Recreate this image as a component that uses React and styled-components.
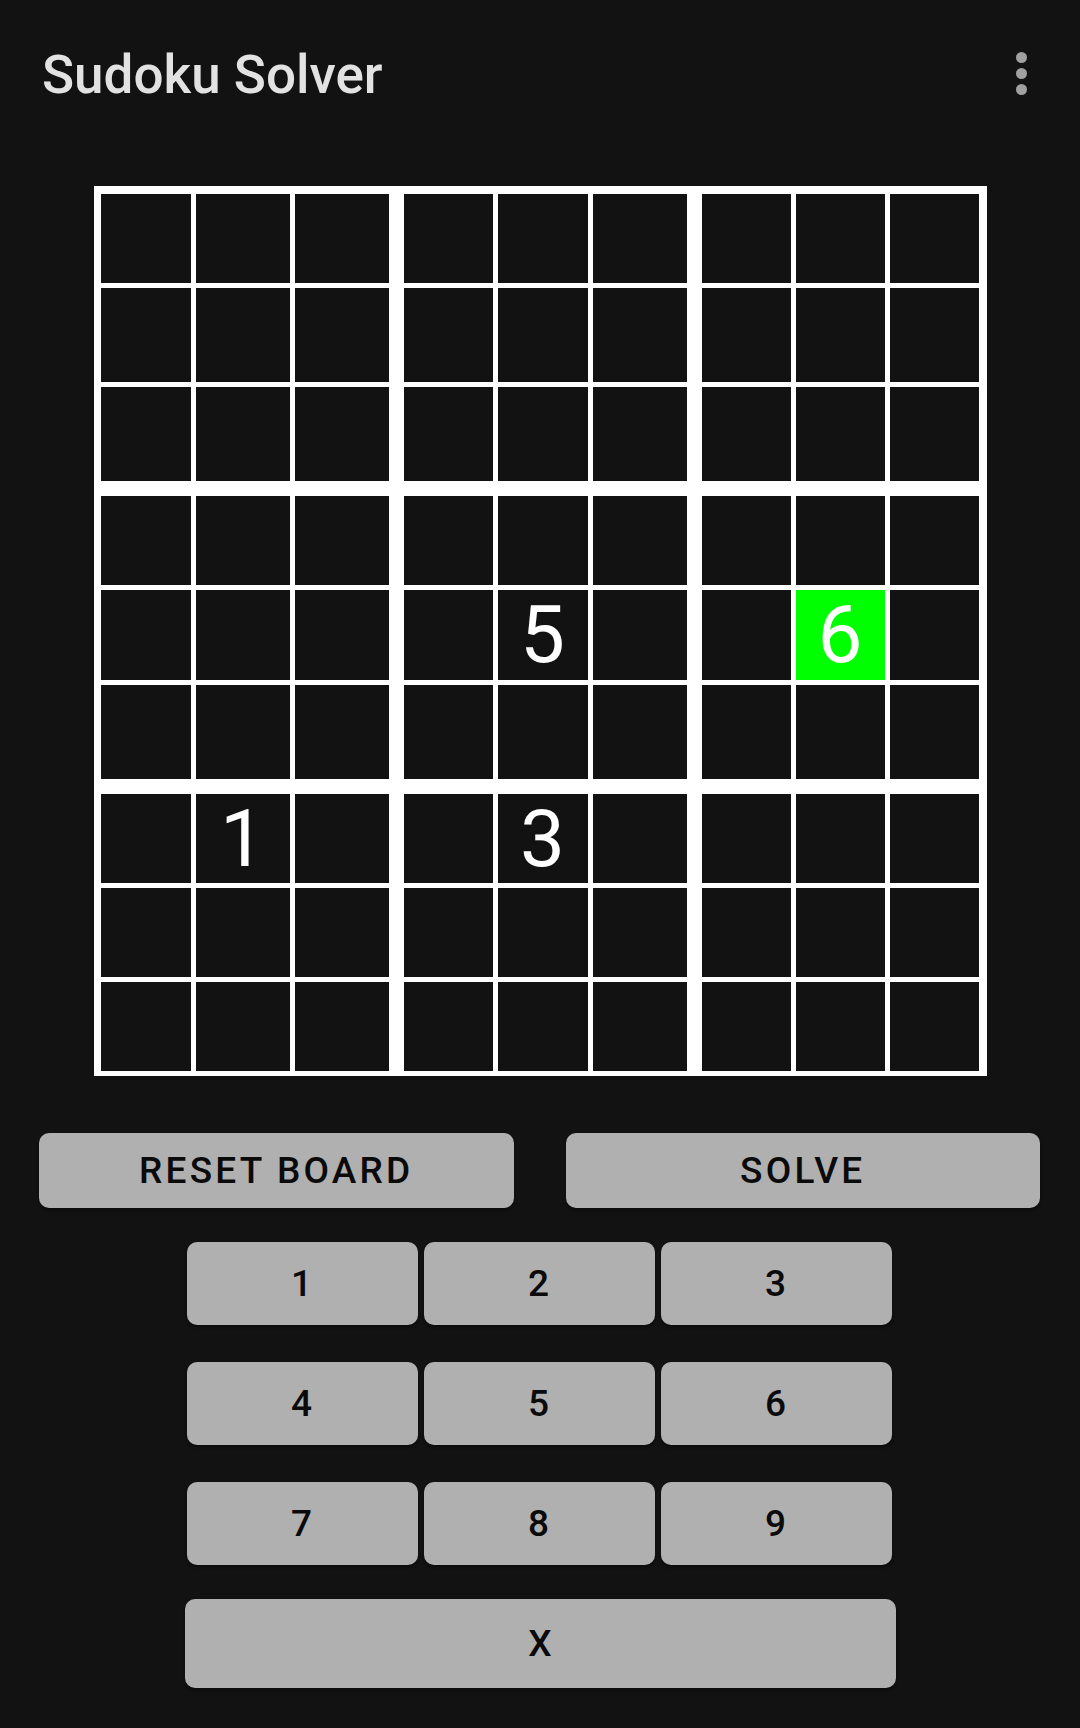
import styled, { createGlobalStyle } from 'styled-components'

const GlobalStyle = createGlobalStyle`
  body {
    margin: 0;
    background: #121212;
    font-family: Roboto, "Noto Sans", sans-serif;
  }
`

// irregular track sizes, measured from the device layout
const COLS = ['90px 94px 94px', '89px 90px 94px', '89px 89px 89px']
const ROWS = ['89px 94px 94px', '89px 90px 94px', '89px 89px 89px']

const givens = {
  '4-4': '5',
  '4-7': '6',
  '6-1': '1',
  '6-4': '3',
}
const selected = '4-7'

const App = () => {
  const boxes = []
  for (let br = 0; br < 3; br++) {
    for (let bc = 0; bc < 3; bc++) {
      const cells = []
      for (let r = 0; r < 3; r++) {
        for (let c = 0; c < 3; c++) {
          const key = `${br * 3 + r}-${bc * 3 + c}`
          cells.push(
            <Cell key={key} $active={key === selected}>
              {givens[key] ?? ''}
            </Cell>
          )
        }
      }
      boxes.push(
        <Box key={`${br}-${bc}`} $cols={COLS[bc]} $rows={ROWS[br]}>
          {cells}
        </Box>
      )
    }
  }

  return (
    <Page>
      <GlobalStyle />
      <Header>
        <Title>Sudoku Solver</Title>
        <Overflow>
          <Dot />
          <Dot />
          <Dot />
        </Overflow>
      </Header>

      <BoardWrap>
        <Board>{boxes}</Board>
      </BoardWrap>

      <Actions>
        <ActionBtn>Reset Board</ActionBtn>
        <ActionBtn>Solve</ActionBtn>
      </Actions>

      <Pad>
        {[1, 2, 3, 4, 5, 6, 7, 8, 9].map(n => (
          <PadBtn key={n}>{n}</PadBtn>
        ))}
      </Pad>

      <ClearRow>
        <ClearBtn>X</ClearBtn>
      </ClearRow>
    </Page>
  )
}
export default App

const Page = styled.div`
  min-height: 1728px;
  background: #121212;
`

const Header = styled.header`
  height: 147px;
  display: flex;
  align-items: center;
  justify-content: space-between;
  padding: 0 53px 0 42px;
  box-sizing: border-box;
`

const Title = styled.h1`
  margin: 0;
  font-family: Roboto, sans-serif;
  font-weight: 500;
  font-size: 53px;
  color: #e2e2e2;
  letter-spacing: 0;
  padding-top: 2px;
`

const Overflow = styled.div`
  display: flex;
  flex-direction: column;
  gap: 5px;
`

const Dot = styled.span`
  width: 11px;
  height: 11px;
  border-radius: 50%;
  background: #a0a0a0;
`

const BoardWrap = styled.div`
  display: flex;
  justify-content: center;
  padding-top: 39px;
`

const Board = styled.div`
  display: grid;
  grid-template-columns: 288px 283px 277px;
  grid-template-rows: 287px 283px 277px;
  gap: 15px;
  padding: 8px 8px 5px 7px;
  background: #ffffff;
`

const Box = styled.div`
  display: grid;
  grid-template-columns: ${p => p.$cols};
  grid-template-rows: ${p => p.$rows};
  gap: 5px;
`

const Cell = styled.div`
  display: flex;
  align-items: center;
  justify-content: center;
  background: ${p => (p.$active ? '#00ff00' : '#121212')};
  color: #ffffff;
  font-family: Roboto, sans-serif;
  font-size: 80px;
  line-height: 1;
`

const Btn = styled.button`
  border: none;
  border-radius: 10px;
  background: #b0b0b0;
  color: #0a0a0a;
  font-family: Roboto, sans-serif;
  font-weight: 500;
  font-size: 37px;
  text-transform: uppercase;
  box-shadow: 0 2px 3px rgba(0, 0, 0, 0.45);
  padding: 0;
  cursor: pointer;
`

const Actions = styled.div`
  display: grid;
  grid-template-columns: 1fr 1fr;
  gap: 52px;
  padding: 57px 40px 0 39px;
`

const ActionBtn = styled(Btn)`
  height: 75px;
  letter-spacing: 3.2px;
`

const Pad = styled.div`
  display: grid;
  grid-template-columns: repeat(3, 231px);
  grid-auto-rows: 83px;
  column-gap: 6px;
  row-gap: 37px;
  justify-content: center;
  padding: 34px 2px 0 0;
`

const PadBtn = styled(Btn)`
  letter-spacing: 1px;
`

const ClearRow = styled.div`
  display: flex;
  justify-content: center;
  padding-top: 34px;
`

const ClearBtn = styled(Btn)`
  width: 711px;
  height: 89px;
`
